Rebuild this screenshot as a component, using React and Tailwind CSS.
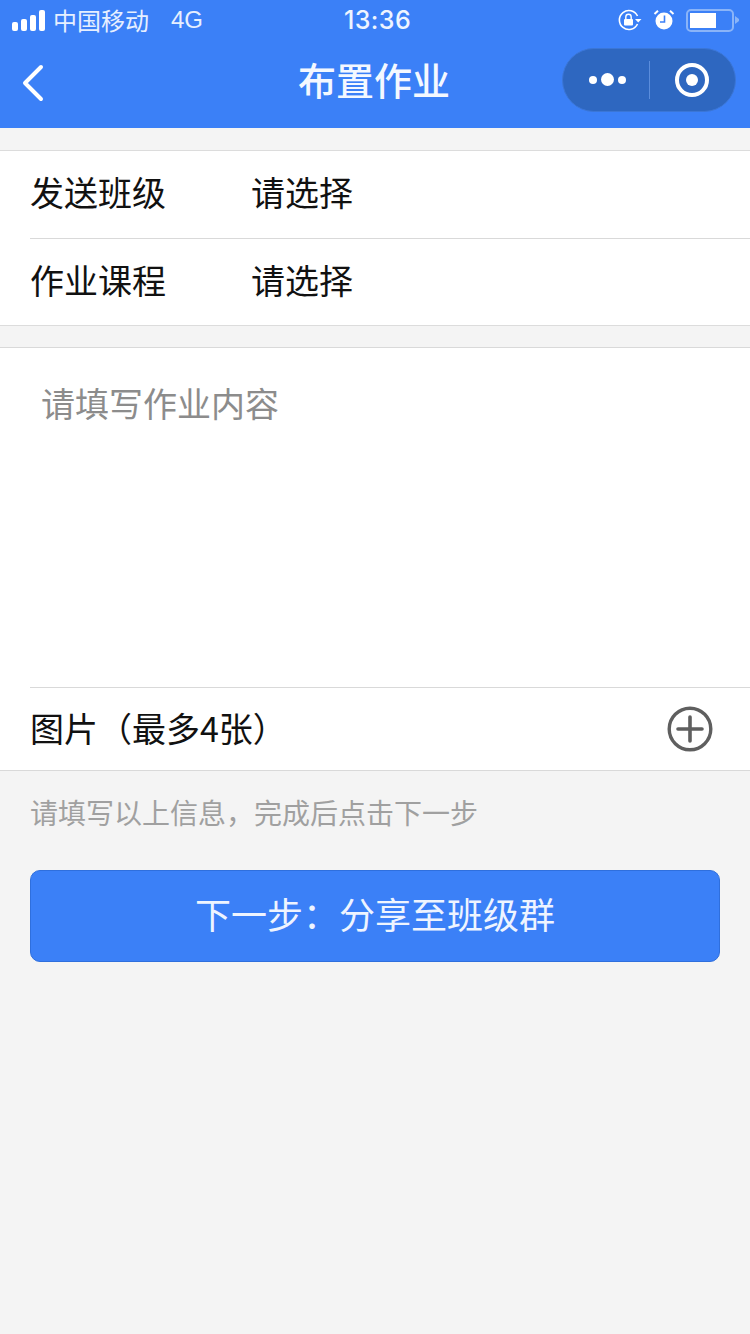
import React from 'react'

const font = { fontFamily: '"Noto Sans CJK SC", sans-serif' }

const SignalBars = () => (
  <div className="flex items-end gap-[3px] w-[33px] h-[21px]">
    <div className="w-[6px] h-[9px] rounded-[2px] bg-white" />
    <div className="w-[6px] h-[12px] rounded-[2px] bg-white" />
    <div className="w-[6px] h-[16px] rounded-[2px] bg-white" />
    <div className="w-[6px] h-[21px] rounded-[2px] bg-white" />
  </div>
)

const LockIcon = () => (
  <svg width="24" height="22" viewBox="0 0 24 22" fill="none">
    <path d="M19.5 7 A9.5 9.5 0 1 0 19.5 15" stroke="white" strokeWidth="1.6" />
    <path d="M17 10 L23.5 10 L20.2 13.5 Z" fill="white" />
    <rect x="6" y="10" width="9" height="6.5" rx="1" fill="white" />
    <path d="M7.8 10 V8 a2.7 2.7 0 0 1 5.4 0 V10" stroke="white" strokeWidth="1.4" />
  </svg>
)

const AlarmIcon = () => (
  <svg width="22" height="22" viewBox="0 0 22 22" fill="none">
    <circle cx="11" cy="12" r="8.5" fill="white" />
    <path d="M11.5 6.5 V13 H7" stroke="#3b80f7" strokeWidth="1.6" />
    <path d="M1.5 5 L5 1.8 M20.5 5 L17 1.8" stroke="white" strokeWidth="2" />
  </svg>
)

const Battery = () => (
  <div className="flex items-center">
    <div className="w-[48px] h-[23px] rounded-[5px] border-2 border-[#8ab4f8] p-[2px]">
      <div className="w-[26px] h-full bg-white" />
    </div>
    <svg width="5" height="8" viewBox="0 0 5 8" className="ml-[1px]">
      <path d="M0 0 L4 3 V5 L0 8 Z" fill="#8ab4f8" />
    </svg>
  </div>
)

const StatusBar = () => (
  <div className="relative flex items-center justify-between h-[40px] pl-[12px] pr-[10px]">
    <div className="flex items-center">
      <SignalBars />
      <span className="ml-[8px] text-[24px] leading-[30px] text-[#e6efff]">中国移动</span>
      <span className="ml-[22px] text-[24px] leading-[30px] text-[#e6efff]" style={{ fontFamily: '"Liberation Sans", sans-serif' }}>4G</span>
    </div>
    <span className="absolute left-[344px] top-[5px] text-[25px] leading-[30px] font-medium tracking-[0.4px] text-[#eef4ff]" style={{ fontFamily: 'Inter, sans-serif' }}>13:36</span>
    <div className="flex items-center">
      <LockIcon />
      <div className="ml-[11px]"><AlarmIcon /></div>
      <div className="ml-[11px]"><Battery /></div>
    </div>
  </div>
)

const NavBar = () => (
  <div className="relative flex items-center justify-between h-[88px] pl-[20px] pr-[14px]">
    <svg width="28" height="40" viewBox="0 0 28 40" fill="none" className="mt-[-3px]">
      <path d="M21 4 L5 20 L21 36" stroke="white" strokeWidth="4" strokeLinecap="round" strokeLinejoin="round" />
    </svg>
    <span className="absolute left-0 right-[2px] top-[14px] text-center text-[38px] leading-[50px] font-medium text-[#f4f8ff]">布置作业</span>
    <div className="flex items-center w-[174px] h-[64px] mt-[-9px] rounded-full bg-[#2e67c0] border border-[#3b76d6]">
      <div className="flex items-center justify-center gap-[4px] w-[86px] h-full pl-[2px]">
        <div className="w-[8px] h-[8px] rounded-full bg-white" />
        <div className="w-[13px] h-[13px] rounded-full bg-white" />
        <div className="w-[8px] h-[8px] rounded-full bg-white" />
      </div>
      <div className="w-px h-[38px] bg-[#5b8ddc]" />
      <div className="flex items-center justify-center flex-1 h-full pr-[2px]">
        <div className="flex items-center justify-center w-[34px] h-[34px] rounded-full border-[4px] border-white">
          <div className="w-[12px] h-[12px] rounded-full bg-white" />
        </div>
      </div>
    </div>
  </div>
)

const SelectRow = ({ label, className }) => (
  <div className={`flex items-center ml-[30px] text-[34px] text-[#111] ${className}`}>
    <span className="w-[221px]">{label}</span>
    <span>请选择</span>
  </div>
)

export default function App() {
  return (
    <div className="flex flex-col w-[750px] h-[1334px] bg-[#f4f4f4] overflow-hidden" style={font}>
      <div className="bg-[#3b80f7]">
        <StatusBar />
        <NavBar />
      </div>

      <div className="mt-[22px] bg-white border-y border-[#dcdcdc]">
        <SelectRow label="发送班级" className="h-[88px] pb-[7px] border-b border-[#d9d9d9]" />
        <SelectRow label="作业课程" className="h-[86px] pb-[5px]" />
      </div>

      <div className="mt-[21px] bg-white border-y border-[#d9d9d9]">
        <div className="h-[339px] pl-[41px] pt-[27px] text-[34px] leading-[56px] text-[#8c8c8c]">请填写作业内容</div>
        <div className="flex items-center justify-between h-[83px] ml-[30px] pr-[37px] border-t border-[#d9d9d9] text-[#111]">
          <span className="text-[34px] pb-[3px]">图片（最多4张）</span>
          <svg width="46" height="46" viewBox="0 0 46 46" fill="none">
            <circle cx="23" cy="23" r="20.8" stroke="#5f5f5f" strokeWidth="3.4" />
            <path d="M23 11 V35 M11 23 H35" stroke="#5f5f5f" strokeWidth="3.6" strokeLinecap="round" />
          </svg>
        </div>
      </div>

      <p className="mt-[21px] ml-[30px] text-[28px] leading-[40px] text-[#a0a0a0]">请填写以上信息，完成后点击下一步</p>

      <button className="mt-[38px] mx-[30px] h-[92px] pb-[6px] rounded-[10px] bg-[#3b80f7] border border-[#2f6fdd] text-[36px] text-[#eef4ff]">
        下一步：分享至班级群
      </button>
    </div>
  )
}
